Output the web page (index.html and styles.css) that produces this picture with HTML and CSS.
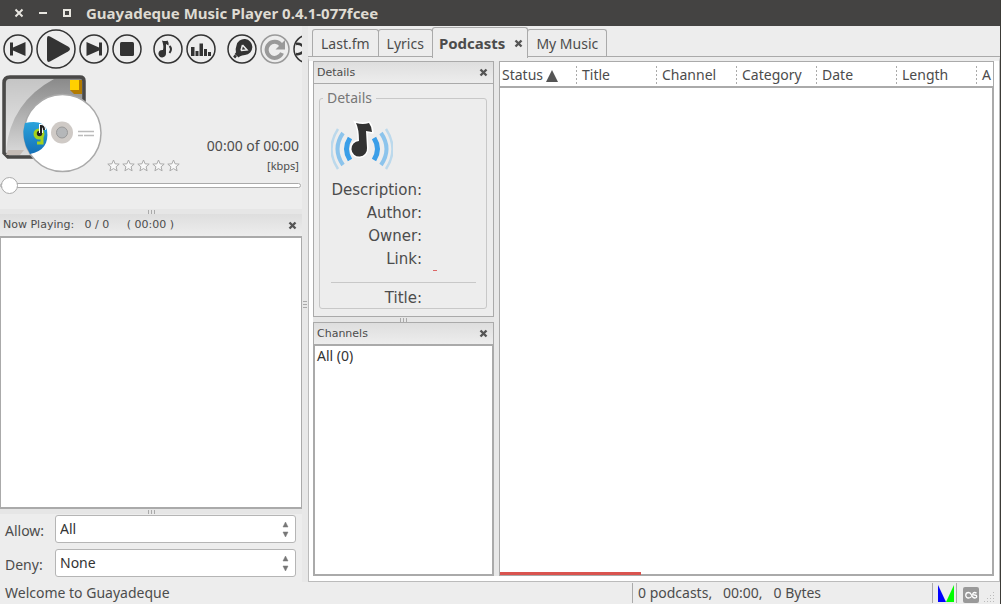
FILE: index.html
```html
<!DOCTYPE html>
<html lang="en">
<head>
<meta charset="utf-8">
<title>Guayadeque Music Player 0.4.1-077fcee</title>
<link rel="stylesheet" href="styles.css">
</head>
<body>
<svg class="defs" aria-hidden="true">
  <symbol id="x" viewBox="0 0 9 9"><path d="M1.500 1.500l6 6M7.500 1.500l-6 6" stroke="#555" stroke-width="2.400"/></symbol>
  <symbol id="star" viewBox="0 0 13 13"><path d="M6.500 1l1.600 3.800 4.100.3-3.100 2.700 1 4-3.600-2.200-3.600 2.200 1-4L.8 5.100l4.100-.3z" fill="#f8f8f8" stroke="#aaa"/></symbol>
  <symbol id="arrows" viewBox="0 0 7 18"><path d="M3.500 2L6 7H1zM3.500 17L6 12H1z" fill="#777" stroke="#777" stroke-width=".5"/></symbol>
</svg>
<header class="titlebar">
  <button class="win" aria-label="Close"><svg width="10" height="10"><path d="M1.500 1.500l7 7M8.500 1.500l-7 7" stroke="#e8e6e0" stroke-width="2"/></svg></button>
  <button class="win" aria-label="Minimize"><svg width="10" height="10"><path d="M1 5h8" stroke="#e8e6e0" stroke-width="2"/></svg></button>
  <button class="win" aria-label="Maximize"><svg width="10" height="10"><path d="M2 2h6v6H2z" fill="none" stroke="#e8e6e0" stroke-width="2"/></svg></button>
  <h1>Guayadeque Music Player 0.4.1-077fcee</h1>
</header>
<main class="main">
  <section class="player">
    <div class="toolbar">
      <button aria-label="Previous"><svg width="30" height="30"><circle cx="15" cy="15" r="14"/><path class="f" d="M7 8.500h3v5L22.500 8v14L10 16.500v5H7z"/></svg></button>
      <button aria-label="Play"><svg width="40" height="40"><circle cx="20" cy="20" r="19"/><path class="f" d="M11 9.500q0-3.500 3-2l18 10q4 2.500 0 5l-18 10q-3 1.500-3-2z"/></svg></button>
      <button aria-label="Next"><svg width="30" height="30"><circle cx="15" cy="15" r="14"/><path class="f" d="M23 8.500h-3v5L7.500 8v14L20 16.500v5h3z"/></svg></button>
      <button aria-label="Stop"><svg width="30" height="30"><circle cx="15" cy="15" r="14"/><rect class="f" x="8" y="8" width="14" height="14" rx="1.500"/></svg></button>
      <button class="apart" aria-label="Volume"><svg width="30" height="30"><circle cx="15" cy="15" r="14"/><path class="f" d="M9 6.500q3 1 5.500 0 1.500 2 1 5l-2.500-1.500v9.500a3.800 3.800 0 1 1-3-3.500q1-4-1-9.500z"/><path d="M16.500 12q3 3 0 7" stroke-width="2"/></svg></button>
      <button aria-label="Equalizer"><svg width="30" height="30"><circle cx="15" cy="15" r="14"/><path class="f" d="M5 13h3.500v9H5zM9.500 17h3v5h-3zM13.500 9.500H17V22h-3.500zM18 15h3v7h-3zM22 18h3v4h-3z"/></svg></button>
      <button class="apart" aria-label="Smart play"><svg width="30" height="30"><circle cx="15" cy="15" r="14"/><path class="f" d="M9 19q-1-4 .5-7.500a8 8 0 1 1 8.500 9.500q-3 0-5.500 1.500z"/><path d="M8.500 19l4 3.500M7 21.500l2 2" stroke-width="2.500"/><path d="M15.500 11l-1.500 5.500M15.500 11l4.500 5-6 .5" stroke="#ededed" stroke-width="1.500"/></svg></button>
      <button class="dim" aria-label="Repeat"><svg width="30" height="30"><circle cx="15" cy="15" r="14"/><path d="M22 19a8 8 0 1 1-1-8" stroke-width="4"/><path class="f" d="M25 6v9.500h-9.500z"/></svg></button>
      <button aria-label="Random"><svg width="30" height="30"><circle cx="15" cy="15" r="14"/><path d="M3 10q6-1 9 5 2 5 8 5M3 20q6 1 9-5" stroke-width="2.500"/></svg></button>
    </div>
    <div class="track">
      <svg class="cover" width="102" height="102" viewBox="0 0 102 102" role="img" aria-label="Album cover">
        <defs><linearGradient id="g1" x1="0" y1="0" x2="0" y2="1"><stop offset="0" stop-color="#888"/><stop offset="1" stop-color="#ddd"/></linearGradient>
        <linearGradient id="g2" x1="0" y1="0" x2="0" y2="1"><stop offset="0" stop-color="#2ba4dc"/><stop offset="1" stop-color="#1470b8"/></linearGradient></defs>
        <path d="M10 5h70q4 0 4 4v76H8l-4-4V11q0-6 6-6z" fill="url(#g1)" stroke="#4a4948" stroke-width="3.500"/>
        <path d="M6 78Q11 30 54 7H10Q6 7 6 11z" fill="#fff" opacity=".5"/>
        <path d="M6 83l2-5h16l-4 5z" fill="#c4bbb5"/>
        <path d="M70 8h12v14H74l-4-4z" fill="#b37b00"/><path d="M70 8h9v10h-9z" fill="#ffd000"/>
        <circle cx="62.500" cy="61" r="38.500" fill="#fff" stroke="#aaa" stroke-width="1.500"/>
        <path d="M25 51q18-4 22 7 3 20-17 24Q20 66 25 51z" fill="url(#g2)"/>
        <path d="M42 57v14h-5" fill="none" stroke="#a6d21c" stroke-width="3"/><circle cx="39" cy="62" r="5.500" fill="#a6d21c"/>
        <circle cx="39.500" cy="61.500" r="2.700" fill="#222"/><path d="M41 61v-7q3 0 3 4" fill="none" stroke="#fff" stroke-width="4"/><path d="M41 61v-7q3 0 3 4" fill="none" stroke="#222" stroke-width="2"/>
        <circle cx="62" cy="60.500" r="11" fill="#cfcac6"/><circle cx="62" cy="60.500" r="5.500" fill="#b5b7b9" stroke="#999"/>
        <path d="M78 59.500h16M78 63.500h5M84 63.500h10" stroke="#bbb" stroke-width="1.500"/>
      </svg>
      <div class="stars" role="img" aria-label="Rating: 0 of 5">
        <svg><use href="#star"/></svg><svg><use href="#star"/></svg><svg><use href="#star"/></svg><svg><use href="#star"/></svg><svg><use href="#star"/></svg>
      </div>
      <div class="times"><span>00:00 of 00:00</span><small>[kbps]</small></div>
    </div>
    <input class="seek" type="range" min="0" max="100" value="0" aria-label="Position">
    <div class="sash first"></div>
    <div class="caption"><span>Now Playing:&nbsp;&nbsp; 0 / 0 &nbsp;&nbsp;&nbsp; ( 00:00 )</span><button aria-label="Close Now Playing"><svg><use href="#x"/></svg></button></div>
    <div class="list grow"></div>
    <div class="sash"></div>
    <form class="filters">
      <label for="allow">Allow:</label>
      <div class="combo"><select id="allow"><option>All</option></select><svg><use href="#arrows"/></svg></div>
      <label for="deny">Deny:</label>
      <div class="combo"><select id="deny"><option>None</option></select><svg><use href="#arrows"/></svg></div>
    </form>
  </section>
  <div class="vsash"></div>
  <section class="notebook">
    <nav class="tabs" role="tablist">
      <button role="tab">Last.fm</button>
      <button role="tab">Lyrics</button>
      <button role="tab" class="active" aria-selected="true">Podcasts <svg><use href="#x"/></svg></button>
      <button role="tab">My Music</button>
    </nav>
    <div class="page">
      <div class="side">
        <section class="details">
          <div class="caption"><span>Details</span><button aria-label="Close Details"><svg><use href="#x"/></svg></button></div>
          <fieldset>
            <legend>Details</legend>
            <svg class="cast" width="62" height="54" viewBox="0 0 62 54" fill="none">
              <path d="M19 18q-7 11 0 22M43 18q7 11 0 22" stroke="#3a9ee8" stroke-width="5"/>
              <path d="M12 13q-11 16 0 32M50 13q11 16 0 32" stroke="#8cc4ec" stroke-width="4"/>
              <path d="M7 9q-13 20 0 40M55 9q13 20 0 40" stroke="#bcd9ec" stroke-width="2.500"/>
              <path d="M25 3q7 2 13 0 3 4 3 9l-6-1 1 17a7.800 7.800 0 1 1-8-7q0-12-3-18z" fill="#333" stroke="#fff" stroke-width="3" paint-order="stroke"/>
            </svg>
            <dl>
              <dt>Description:</dt><dd></dd>
              <dt>Author:</dt><dd></dd>
              <dt>Owner:</dt><dd></dd>
              <dt>Link:</dt><dd><a href="#" aria-label="Channel link"></a></dd>
            </dl>
            <hr>
            <dl><dt>Title:</dt><dd></dd></dl>
          </fieldset>
        </section>
        <div class="sash"></div>
        <section class="channels">
          <div class="caption"><span>Channels</span><button aria-label="Close Channels"><svg><use href="#x"/></svg></button></div>
          <ul class="list grow"><li>All (0)</li></ul>
        </section>
      </div>
      <div class="gap"></div>
      <section class="podcasts">
        <table>
          <thead><tr><th>Status<svg width="12" height="12"><path d="M6 0l6 12H0z" fill="#555"/></svg></th><th>Title</th><th>Channel</th><th>Category</th><th>Date</th><th>Length</th><th class="last">A</th></tr></thead>
        </table>
        <div class="rows"></div>
        <div class="scroll"></div>
      </section>
    </div>
  </section>
</main>
<footer class="status">
  <span class="message">Welcome to Guayadeque</span>
  <span class="totals">0 podcasts, &nbsp; 00:00, &nbsp; 0 Bytes</span>
  <span class="meter"><svg width="18" height="17"><path d="M1 0l8 17H1z" fill="#00f"/><path d="M17 0L9 17h8z" fill="#0f0"/></svg></span>
  <span class="scrobble"><svg width="16" height="16" role="img" aria-label="Last.fm"><rect width="16" height="16" rx="2" fill="#999"/><path d="M8.500 9.500Q7.500 11 5.500 11A2.700 2.700 0 0 1 5.500 5.500Q7.500 5.500 8.500 8t3 3q2.200 0 2.200-1.500T11.500 8 9.800 6.800 11.500 5.500t2 .8" fill="none" stroke="#fff" stroke-width="1.300"/></svg>
  <svg width="12" height="12" fill="#bbb"><path d="M9 1h1v1H9zM6 4h1v1H6zM9 4h1v1H9zM3 7h1v1H3zM6 7h1v1H6zM9 7h1v1H9zM0 10h1v1H0zM3 10h1v1H3zM6 10h1v1H6zM9 10h1v1H9z"/></svg></span>
</footer>
</body>
</html>
```
FILE: styles.css
```css
* { box-sizing: border-box; }
body {
  margin: 0;
  height: 100vh;
  display: flex;
  flex-direction: column;
  overflow: hidden;
  background: #ededed;
  border-right: 1px solid #3c3b37;
  color: #4c4c4c;
  font: 14px/20px "Noto Sans", sans-serif;
}
button { font: inherit; color: inherit; background: none; border: 0; padding: 0; }
.defs { display: none; }
svg { display: block; flex: none; }

.titlebar {
  flex: none;
  height: 26px;
  display: flex;
  align-items: center;
  gap: 14px;
  padding-left: 14px;
  background: #444342;
  color: #dfdbd2;
}
.titlebar h1 { margin: 0; font-size: 15px; line-height: 20px; }

.main { flex: 1; min-height: 0; display: flex; }
.player { width: 302px; flex: none; display: flex; flex-direction: column; }
.toolbar { height: 46px; flex: none; display: flex; align-items: center; gap: 3px; padding-left: 3px; overflow: hidden; }
.toolbar svg { fill: none; stroke: #333; stroke-width: 1.5; }
.toolbar .f { fill: #333; stroke: none; }
.toolbar .apart { margin-left: 8px; }
.toolbar .dim svg { stroke: #999; }
.toolbar .dim .f { fill: #999; }
.track { display: flex; align-items: flex-end; height: 104px; flex: none; padding-right: 3px; }
.cover { align-self: flex-start; }
.stars { display: flex; gap: 2px; padding: 0 0 4px 5px; }
.stars svg { width: 13px; height: 13px; }
.times { flex: 1; display: flex; flex-direction: column; align-items: flex-end; }
.times small { font-size: 11px; }

.seek { appearance: none; width: 100%; height: 18px; margin: 0; flex: none; background: none; }
.seek::-webkit-slider-runnable-track { height: 5px; margin-right: 1px; border: 1px solid #aaa; border-radius: 3px; background: #fff; }
.seek::-webkit-slider-thumb { appearance: none; width: 17px; height: 17px; margin-top: -7px; border: 1px solid #aaa; border-radius: 50%; background: #fff; }

.sash {
  flex: none;
  height: 5px;
  background: #e6e6e6 repeating-linear-gradient(90deg, #aaa 0 1px, transparent 1px 3px) center / 7px 4px no-repeat;
}
.sash.first { margin-top: 15px; }
.caption {
  flex: none;
  height: 22px;
  display: flex;
  align-items: center;
  justify-content: space-between;
  padding: 0 5px 0 3px;
  background: linear-gradient(#dedede, #ededed);
  font: 11px/20px "DejaVu Sans", sans-serif;
}
.caption svg, .tabs svg { width: 9px; height: 9px; }
.list { margin: 0; padding: 0; list-style: none; background: #fff; border: 2px solid #aaa; border-width: 2px 1px; color: #333; }
.grow { flex: 1; min-height: 0; }
.filters { flex: none; display: grid; grid-template-columns: 46px 1fr; gap: 6px 4px; align-items: center; padding: 1px 6px 5px 5px; }
.filters label { padding-top: 3px; }
.combo { position: relative; }
.combo select {
  appearance: none;
  display: block;
  width: 100%;
  height: 28px;
  padding: 0 4px;
  border: 1px solid #b5b5b5;
  border-radius: 3px;
  background: #fff;
  color: #333;
  font: inherit;
}
.combo svg { position: absolute; right: 7px; top: 5px; width: 7px; height: 18px; pointer-events: none; }

.vsash {
  width: 6px;
  flex: none;
  background: #e8e8e8 repeating-linear-gradient(#aaa 0 1px, transparent 1px 3px) center / 4px 7px no-repeat;
}
.notebook { flex: 1; min-width: 0; display: flex; flex-direction: column; }
.tabs { height: 31px; flex: none; display: flex; align-items: flex-end; padding-left: 4px; }
.tabs button {
  height: 28px;
  display: flex;
  align-items: center;
  gap: 9px;
  padding: 0 8px;
  border: 1px solid #aaa;
  border-bottom: 0;
  margin-right: -1px;
  border-radius: 3px 3px 0 0;
}
.tabs .active { height: 31px; padding: 0 4px 0 6px; font-size: 15px; font-weight: bold; background: #ededed; position: relative; z-index: 1; margin-bottom: -1px; }
.page {
  flex: 1;
  min-height: 0;
  display: flex;
  padding: 0 5px 5px 4px;
  border: 1px solid #bbb;
  border-top: 4px solid #ededed;
  box-shadow: 0 -1px #aaa;
  background: #fff;
}
.side { width: 181px; flex: none; display: flex; flex-direction: column; }
.details, .channels { flex: 1 1 0; min-height: 0; display: flex; flex-direction: column; }
.details { background: #ededed; border: 1px solid #aaa; }
.details .caption { border-bottom: 1px solid #aaa; }
.channels .caption { border: 1px solid #aaa; border-bottom: 0; }
.channels .list { padding: 0 2px; border-width: 2px; }
fieldset { flex: 1; min-height: 0; margin: 4px 6px 7px 5px; padding: 12px 10px 0 11px; border: 1px solid #c8c8c8; border-radius: 3px; overflow: visible; }
legend { margin-left: -8px; padding: 0 4px; color: #777; }
dl { margin: 0; display: grid; grid-template-columns: 91px 1fr; column-gap: 11px; font: 15px/23px "DejaVu Sans", sans-serif; }
dt { text-align: right; }
dd { margin: 0; display: flex; align-items: flex-end; }
dd a { width: 4px; height: 1px; background: #d66; }
.cast { margin-bottom: 5px; }
hr { margin: 11px 0 4px; border: 0; border-top: 1px solid #c8c8c8; }
.gap { width: 5px; flex: none; background: #e8e8e8; }
.podcasts { flex: 1; min-width: 0; display: flex; flex-direction: column; position: relative; overflow: hidden; border-top: 1px solid #aaa; border-right: 1px solid #aaa; border-left: 1px solid #aaa; }
table { width: 100%; table-layout: fixed; border-collapse: collapse; }
th { width: 80px; height: 24px; padding: 2px 0 0 2px; text-align: left; font-weight: normal; white-space: nowrap; background: linear-gradient(#aaa 50%, transparent 50%) 76px 4px / 1px 4px repeat-y; background-clip: content-box; }
th.last { width: auto; background: none; }
th svg { display: inline-block; margin-left: 3px; vertical-align: -2px; }
.rows { flex: 1; border: solid #aaa; border-width: 2px 1px 2px 0; }
.scroll { position: absolute; left: 0; bottom: 1px; width: 141px; height: 3px; background: #d9534f; }

.status { flex: none; height: 22px; display: flex; align-items: center; }
.status span { height: 20px; }
.message { flex: 1; padding-left: 5px; }
.totals { width: 300px; padding-left: 5px; border-left: 1px solid #aaa; }
.meter { width: 24px; padding: 2px 0 0 4px; border-left: 1px solid #aaa; }
.scrobble { width: 44px; display: flex; align-items: flex-end; gap: 5px; padding-left: 6px; border-left: 1px solid #aaa; }
```
